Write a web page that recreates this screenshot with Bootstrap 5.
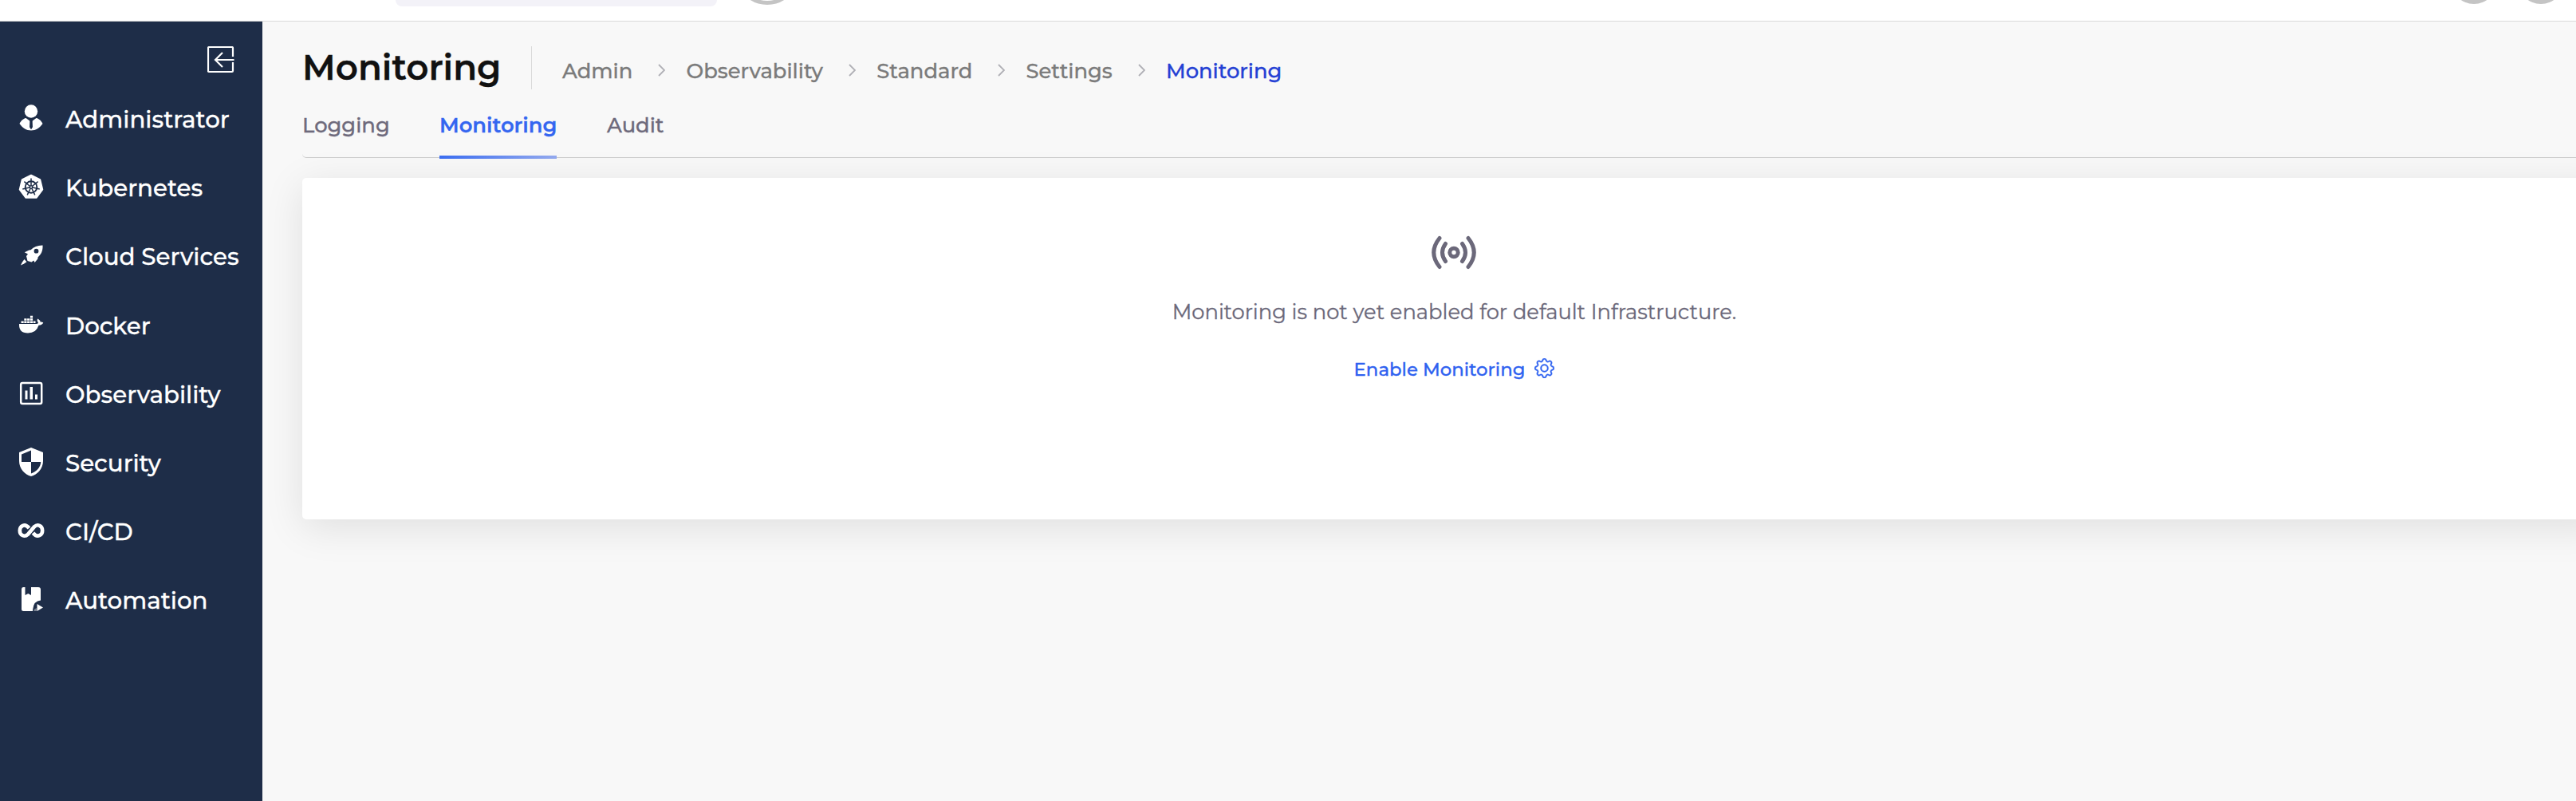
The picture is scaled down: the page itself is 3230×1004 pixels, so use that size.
<!DOCTYPE html>
<html lang="en">
<head>
<meta charset="utf-8">
<meta name="viewport" content="width=device-width, initial-scale=1">
<title>Monitoring</title>
<link href="https://cdn.jsdelivr.net/npm/bootstrap@5.3.0/dist/css/bootstrap.min.css" rel="stylesheet">
<style>
body{font-family:Montserrat,Inter,"Liberation Sans",sans-serif;background:#f8f8f8;height:1004px;overflow:hidden;-webkit-text-stroke:.3px currentColor}
.topbar{height:27px;border-bottom:1px solid #d9d9d9;overflow:hidden;padding:0 15.5px 0 496px}
.search-pill{width:403px;height:48px;margin-top:-40px;border-radius:8px;background:#f3f2f8}
.ring{width:80px;height:80px;margin:-74px 0 0 23px;border:5px solid #c4c4c4;border-radius:50%}
.dot{width:58px;height:58px;margin-top:-53px;border-radius:50%;background:#c4c4c4}
.dot+.dot{margin-left:26px}
.shell{height:977px}
.side{width:329px;background:#1e2d48;color:#fff;position:relative;z-index:1}
.side-head{height:80px;padding:31px 35px 0 0}
.side .nav-link{height:86.2px;padding:0 0 0 19px;color:#fff;font-size:29.3px;line-height:40px;font-weight:500;white-space:nowrap}
.side .nav-link svg{width:40px;height:40px;margin:0 23px 4px 0;flex:none}
.main{padding:31px 0 0 50px}
.head-row{height:54px}
.page-title{font-size:43.7px;line-height:53px;font-weight:600;color:#111;margin:0;width:287px}
.crumbs{border-left:1px solid #d9d9d9;height:54px;padding:8px 0 0 38px;font-size:25.8px;line-height:46px;font-weight:500;color:#7b7b7b}
.crumbs svg{margin:-2px 26.4px 0 31.8px}
.crumbs .current{color:#2440d4}
.tabs{height:86px;width:2889px;border-bottom:1px solid #ccc;border-bottom-left-radius:5px;font-size:25.8px;line-height:40px;font-weight:500;color:#6e6a7c}
.tabs .tab{height:87px;padding-top:25px;margin-right:62.3px}
.tabs .current{width:147px;margin-right:63px;color:#3466f0;font-weight:600;background:linear-gradient(90deg,#3b6df0,#93a9ee) bottom/100% 4px no-repeat}
.panel{width:2889px;height:428px;margin-top:25px;border-radius:5px;background:#fff;box-shadow:0 10px 50px rgba(0,0,0,.1);padding-top:68px;color:#6b687a}
.panel>svg{margin-left:-1px}
.panel p{font-size:25.75px;line-height:40px;margin:30px 0 0}
.panel a{font-size:22.8px;line-height:30px;font-weight:500;color:#2f62f0;margin-top:37px;gap:12px}
.panel a svg{margin-top:-3px}
</style>
<script src="https://cdn.jsdelivr.net/npm/bootstrap@5.3.0/dist/js/bootstrap.bundle.min.js"></script>
</head>
<body>
<header class="topbar bg-white d-flex align-items-start">
  <div class="search-pill flex-shrink-0"></div>
  <div class="ring flex-shrink-0"></div>
  <div class="dot flex-shrink-0 ms-auto"></div>
  <div class="dot flex-shrink-0"></div>
</header>
<div class="shell d-flex">
  <nav class="side flex-shrink-0">
    <div class="side-head d-flex justify-content-end">
      <svg width="34" height="34" viewBox="0 0 34 34" fill="none" stroke="#fff" stroke-width="2.2"><path d="M32 13V2.200Q32 1 30.800 1H2.200Q1 1 1 2.200V30.800Q1 32 2.200 32H30.800Q32 32 32 30.800V20M33.500 17H10M19 8L10 17L19 26"/></svg>
    </div>
    <div class="nav flex-column flex-nowrap">
      <a class="nav-link d-flex align-items-center" href="#"><svg viewBox="0 0 40 40" fill="#fff"><circle cx="20" cy="11.500" r="8.200"/><path d="M13.500 20L18.300 23.500V31.500L20 34L21.700 31.500V23.500L26.500 20C30 20.500 33 24 34.500 27C31 32 26 35.500 20 35.500S9 32 5.500 27C7 24 10 20.500 13.500 20Z"/><path d="M18.500 21.500H21.500L20.800 24L21.800 31L20 34L18.200 31L19.200 24Z" fill="#1e2d48"/></svg><span>Administrator</span></a>
      <a class="nav-link d-flex align-items-center" href="#"><svg viewBox="0 0 40 40"><path d="M20 6L31 11.300L34 23.500L26.500 33.500H13.500L6 23.500L9 11.300Z" fill="#fff" stroke="#fff" stroke-width="2.500" stroke-linejoin="round"/><g fill="none" stroke="#1e2d48"><circle cx="20" cy="20.500" r="7.300" stroke-width="1.900"/><path stroke-width="1.500" d="M20 20.500V9.500M20 20.500L28.600 13.600M20 20.500L30.700 23M20 20.500L24.800 30.400M20 20.500L15.200 30.400M20 20.500L9.300 23M20 20.500L11.400 13.600"/></g><circle cx="20" cy="20.500" r="2.300" fill="#1e2d48"/><circle cx="20" cy="20.500" r="1" fill="#fff"/></svg><span>Kubernetes</span></a>
      <a class="nav-link d-flex align-items-center" href="#"><svg viewBox="0 0 40 40" fill="#fff"><path fill-rule="evenodd" d="M34.500 7.500C35 14 32.500 19 28.500 22.500L28.300 24.500L24.500 29L23.300 26.500L20.500 28.500L15.500 27L14 21L16 18.500L11.800 16.300L17.500 13.500L19.500 13.300C23.500 9.500 28.500 7.300 34.500 7.500ZM26.500 11.800A2.900 2.900 0 1 0 26.500 17.600A2.900 2.900 0 1 0 26.500 11.800Z"/><path d="M11.500 25L14.500 28.200L10.800 30.800L7 32.500L8.800 28.700Z"/></svg><span>Cloud Services</span></a>
      <a class="nav-link d-flex align-items-center" href="#"><svg viewBox="0 0 40 40" fill="#fff"><path d="M5 19H26.500Q28.500 19 29 17.500Q26.500 14.500 28.500 12.500Q31.500 14.500 31.500 16.500Q34 16.300 35.300 17.500Q34 20.500 29.500 20.800Q26.500 30.500 16 30.500Q4.500 30.500 5 19ZM7.500 15.500h3.200v2.600H7.500zM11.300 15.500h3.200v2.600h-3.200zM15.100 15.500h3.200v2.600h-3.200zM18.900 15.500h3.200v2.600h-3.200zM22.700 15.500h2.800v2.600h-2.800zM11.300 12.200h3.200v2.600h-3.200zM15.100 12.200h3.200v2.600h-3.200zM18.900 12.200h3.200v2.600h-3.200zM18.900 8.800h3.200v2.700h-3.200z"/></svg><span>Docker</span></a>
      <a class="nav-link d-flex align-items-center" href="#"><svg viewBox="0 0 40 40" fill="#fff"><rect x="7.200" y="7" width="26" height="26" rx="2" fill="none" stroke="#fff" stroke-width="2.500"/><path d="M12.500 16.500h3v11h-3zM18.500 12h3.500v15.500h-3.500zM25 21.500h3v6h-3z"/></svg><span>Observability</span></a>
      <a class="nav-link d-flex align-items-center" href="#"><svg viewBox="0 0 40 40" fill="#fff"><path fill-rule="evenodd" d="M20 2L35 8V19C35 28 28 36 20 38C12 36 5 28 5 19V8ZM20 5.500L8 10.500V20H20V34.500C26.500 32.500 32 26.500 32.200 20H20Z"/></svg><span>Security</span></a>
      <a class="nav-link d-flex align-items-center" href="#"><svg viewBox="0 0 40 40" fill="none" stroke="#fff" stroke-width="4.600"><path d="M17.500 17C12 10 5.800 14.500 5.800 20C5.800 26.500 12 28.500 16 24.800L24 15.200C28 11.500 34.200 13.500 34.200 20C34.200 25.500 28 30 22.500 23"/></svg><span>CI/CD</span></a>
      <a class="nav-link d-flex align-items-center" href="#"><svg viewBox="0 0 40 40" fill="#fff"><path d="M10 5H12.500V15L16.300 13L20 15V5H29Q32 5 32 8V21.500Q22.500 22 22 35H10.500Q8 35 8 32.500V7.500Q8 5 10 5ZM27.500 26L35 30.500L27.500 35Z"/><path d="M23.500 33V35H27V31Z" opacity=".4"/></svg><span>Automation</span></a>
    </div>
  </nav>
  <main class="main flex-grow-1">
    <div class="head-row d-flex">
      <h1 class="page-title">Monitoring</h1>
      <div class="crumbs d-flex align-items-center">
        <span>Admin</span>
        <svg width="9" height="16" viewBox="0 0 9 16" fill="none" stroke="#b0b0b6" stroke-width="1.800"><path d="M1 1L8 8L1 15"/></svg>
        <span>Observability</span>
        <svg width="9" height="16" viewBox="0 0 9 16" fill="none" stroke="#b0b0b6" stroke-width="1.800"><path d="M1 1L8 8L1 15"/></svg>
        <span>Standard</span>
        <svg width="9" height="16" viewBox="0 0 9 16" fill="none" stroke="#b0b0b6" stroke-width="1.800"><path d="M1 1L8 8L1 15"/></svg>
        <span>Settings</span>
        <svg width="9" height="16" viewBox="0 0 9 16" fill="none" stroke="#b0b0b6" stroke-width="1.800"><path d="M1 1L8 8L1 15"/></svg>
        <span class="current">Monitoring</span>
      </div>
    </div>
    <div class="tabs d-flex">
      <div class="tab">Logging</div>
      <div class="tab current">Monitoring</div>
      <div class="tab">Audit</div>
    </div>
    <section class="panel d-flex flex-column align-items-center">
      <svg width="58" height="50" viewBox="0 0 58 50" fill="none" stroke="#6b687a" stroke-width="5" stroke-linecap="round"><circle cx="29" cy="25.500" r="5.200"/><path d="M18.500 14.500Q10.500 25.500 18.500 36.500M39.500 14.500Q47.500 25.500 39.500 36.500M11 7.500Q-3.500 25.500 11 43.500M47 7.500Q61.500 25.500 47 43.500"/></svg>
      <p>Monitoring is not yet enabled for default Infrastructure.</p>
      <a href="#" class="d-flex align-items-center text-decoration-none"><span>Enable Monitoring</span>
      <svg width="25" height="25" viewBox="0 0 16 16" fill="#2f62f0" stroke="#2f62f0" stroke-width=".25"><path d="M8 4.754a3.246 3.246 0 1 0 0 6.492 3.246 3.246 0 0 0 0-6.492zM5.754 8a2.246 2.246 0 1 1 4.492 0 2.246 2.246 0 0 1-4.492 0z"/><path d="M9.796 1.343c-.527-1.790-3.065-1.790-3.592 0l-.094.319a.873.873 0 0 1-1.255.52l-.292-.16c-1.640-.892-3.433.902-2.540 2.541l.159.292a.873.873 0 0 1-.52 1.255l-.319.094c-1.790.527-1.790 3.065 0 3.592l.319.094a.873.873 0 0 1 .52 1.255l-.16.292c-.892 1.640.901 3.434 2.541 2.540l.292-.159a.873.873 0 0 1 1.255.52l.094.319c.527 1.790 3.065 1.790 3.592 0l.094-.319a.873.873 0 0 1 1.255-.52l.292.16c1.640.893 3.434-.902 2.540-2.541l-.159-.292a.873.873 0 0 1 .52-1.255l.319-.094c1.790-.527 1.790-3.065 0-3.592l-.319-.094a.873.873 0 0 1-.52-1.255l.16-.292c.893-1.640-.902-3.433-2.541-2.540l-.292.159a.873.873 0 0 1-1.255-.52l-.094-.319zm-2.633.283c.246-.835 1.428-.835 1.674 0l.094.319a1.873 1.873 0 0 0 2.693 1.115l.291-.16c.764-.415 1.600.42 1.184 1.185l-.159.292a1.873 1.873 0 0 0 1.116 2.692l.318.094c.835.246.835 1.428 0 1.674l-.319.094a1.873 1.873 0 0 0-1.115 2.693l.16.291c.415.764-.42 1.600-1.185 1.184l-.291-.159a1.873 1.873 0 0 0-2.693 1.116l-.094.318c-.246.835-1.428.835-1.674 0l-.094-.319a1.873 1.873 0 0 0-2.692-1.115l-.292.16c-.764.415-1.600-.42-1.184-1.185l.159-.291A1.873 1.873 0 0 0 1.945 8.930l-.319-.094c-.835-.246-.835-1.428 0-1.674l.319-.094A1.873 1.873 0 0 0 3.060 4.377l-.16-.292c-.415-.764.42-1.600 1.185-1.184l.292.159a1.873 1.873 0 0 0 2.692-1.115l.094-.319z"/></svg></a>
    </section>
  </main>
</div>
</body>
</html>
